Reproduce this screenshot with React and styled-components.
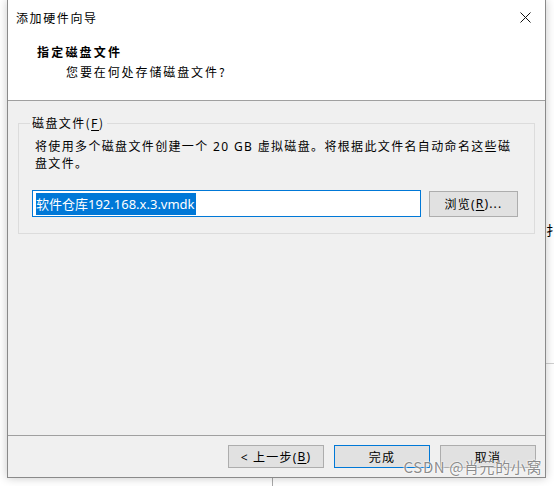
import React from "react";
import styled, { createGlobalStyle } from "styled-components";

const GlobalStyle = createGlobalStyle`
  html, body {
    margin: 0;
    padding: 0;
    background: #ffffff;
  }
  body {
    font-family: "Noto Sans", "Noto Sans CJK SC", sans-serif;
    font-size: 12px;
    color: #000;
  }
`;

const Desk = styled.div`
  position: relative;
  width: 554px;
  height: 486px;
  overflow: hidden;
  background: #ffffff;
`;

const Dialog = styled.div`
  position: relative;
  margin-left: 7px;
  width: 537px;
  height: 477px;
  display: flex;
  flex-direction: column;
  background: #f0f0f0;
  border: 1px solid #8a8a8a;
  border-top: none;
  box-shadow: 0 0 9px rgba(0, 0, 0, 0.22);
`;

const Top = styled.div`
  height: 100px;
  background: #ffffff;
  border-bottom: 1px solid #a0a0a0;
  display: flex;
  flex-direction: column;
`;

const TitleBar = styled.div`
  height: 35px;
  display: flex;
  align-items: center;
  justify-content: space-between;
  padding: 0 10px 0 8px;
`;

const TitleText = styled.span`
  font-family: "Noto Sans CJK SC", sans-serif;
  font-size: 12px;
  letter-spacing: 1.6px;
  color: #000;
`;

const Close = styled.span`
  width: 20px;
  height: 20px;
  display: flex;
  align-items: center;
  justify-content: center;
`;

const HeadTitle = styled.div`
  margin: 7px 0 0 29px;
  line-height: 20px;
  font-family: "Noto Sans CJK SC", sans-serif;
  font-weight: 700;
  font-size: 12px;
  letter-spacing: 2.2px;
`;

const HeadSub = styled.div`
  margin-left: 58px;
  line-height: 20px;
  font-family: "Noto Sans CJK SC", sans-serif;
  font-size: 12px;
  letter-spacing: 1.9px;
`;

const Body = styled.div`
  flex: 1;
  padding: 12px 10px 0 10px;
`;

const Group = styled.fieldset`
  margin: 0;
  padding: 0 14px 16px 13px;
  border: 1px solid #dcdcdc;
  border-radius: 0;
`;

const Legend = styled.legend`
  margin-left: -2px;
  padding: 0 2px;
  line-height: 20px;
  font-family: "Noto Sans CJK SC", sans-serif;
  font-size: 12px;
  letter-spacing: 1.4px;
`;

const Key = styled.span`
  text-decoration: underline;
  text-underline-offset: 2px;
`;

const Desc = styled.p`
  margin: 5px 0 0 3px;
  line-height: 17px;
  font-family: "Noto Sans", "Noto Sans CJK SC", sans-serif;
  font-size: 12px;
  letter-spacing: 1.35px;
  white-space: nowrap;
`;

const Row = styled.div`
  margin-top: 18px;
  display: flex;
  gap: 8px;
  align-items: center;
`;

const Field = styled.div`
  width: 384px;
  height: 25px;
  border: 1px solid #0078d7;
  background: #fff;
  display: flex;
  align-items: center;
  padding-left: 3px;
`;

const Selected = styled.span`
  background: #0078d7;
  color: #fff;
  line-height: 22px;
  font-family: "Noto Sans", "Noto Sans CJK SC", sans-serif;
  font-size: 13px;
  letter-spacing: 0;
  padding-right: 1px;
`;

const Button = styled.div`
  width: ${(p) => p.$w || 94}px;
  height: ${(p) => p.$h || 21}px;
  border: 1px solid ${(p) => (p.$primary ? "#0078d7" : "#adadad")};
  background: #e1e1e1;
  display: flex;
  align-items: center;
  justify-content: center;
  font-family: "Noto Sans", "Noto Sans CJK SC", sans-serif;
  font-size: 12px;
  letter-spacing: 1.2px;
  color: #000;
`;

const Footer = styled.div`
  height: 42px;
  border-top: 1px solid #a0a0a0;
  display: flex;
  justify-content: flex-end;
  align-items: flex-start;
  gap: 10px;
  padding: 9px 9px 0 0;
  box-sizing: border-box;
`;

const Watermark = styled.div`
  position: absolute;
  right: 3px;
  bottom: 0px;
  font-family: "Noto Sans CJK SC", sans-serif;
  font-size: 15px;
  letter-spacing: 0.6px;
  color: rgba(120, 120, 120, 0.85);
  text-shadow: 0 0 2px #fff, 0 0 2px #fff;
  white-space: nowrap;
`;

const SideGlyph = styled.div`
  position: absolute;
  left: 546px;
  top: 220px;
  font-family: "Noto Sans CJK SC", sans-serif;
  font-size: 13px;
  color: #000;
`;

const SideLine = styled.div`
  position: absolute;
  left: 546px;
  top: 363px;
  width: 8px;
  height: 1px;
  background: #d0d0d0;
`;

const BelowLine = styled.div`
  position: absolute;
  left: 272px;
  top: 478px;
  width: 1px;
  height: 8px;
  background: #a8a8a8;
`;

export default function App() {
  return (
    <>
      <GlobalStyle />
      <Desk>
        <SideGlyph>扌</SideGlyph>
        <SideLine />
        <BelowLine />
        <Dialog>
          <Top>
            <TitleBar>
              <TitleText>添加硬件向导</TitleText>
              <Close>
                <svg width="11" height="11" viewBox="0 0 11 11">
                  <path d="M0.5 0.5 L10.5 10.5 M10.5 0.5 L0.5 10.5" stroke="#111" strokeWidth="1" fill="none" />
                </svg>
              </Close>
            </TitleBar>
            <HeadTitle>指定磁盘文件</HeadTitle>
            <HeadSub>您要在何处存储磁盘文件?</HeadSub>
          </Top>
          <Body>
            <Group>
              <Legend>
                磁盘文件(<Key>F</Key>)
              </Legend>
              <Desc>
                将使用多个磁盘文件创建一个 20 GB 虚拟磁盘。将根据此文件名自动命名这些磁
                <br />
                盘文件。
              </Desc>
              <Row>
                <Field>
                  <Selected>软件仓库192.168.x.3.vmdk</Selected>
                </Field>
                <Button $w={87} $h={24}>
                  浏览(<Key>R</Key>)...
                </Button>
              </Row>
            </Group>
          </Body>
          <Footer>
            <Button>
                &lt; 上一步(<Key>B</Key>)
            </Button>
            <Button $primary>完成</Button>
            <Button>取消</Button>
          </Footer>
          <Watermark>CSDN @肖元的小窝</Watermark>
        </Dialog>
      </Desk>
    </>
  );
}
